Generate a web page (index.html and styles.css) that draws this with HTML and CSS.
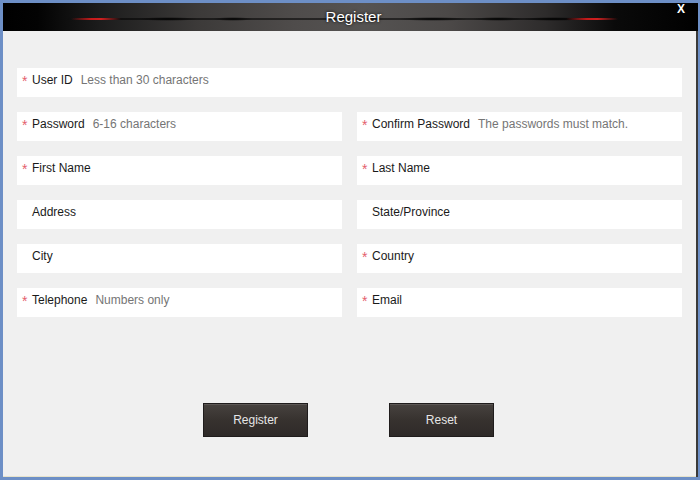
FILE: index.html
```html
<!DOCTYPE html>
<html>
<head>
<meta charset="utf-8">
<link rel="stylesheet" href="styles.css">
</head>
<body>
<div class="window">
  <div class="titlebar">
    <span class="title">Register</span>
    <span class="close">X</span>
  </div>
  <div class="content">
    <div class="form">
      <div class="field full"><span class="req">*</span><span class="label">User ID</span><span class="hint">Less than 30 characters</span></div>
      <div class="field"><span class="req">*</span><span class="label">Password</span><span class="hint">6-16 characters</span></div>
      <div class="field"><span class="req">*</span><span class="label">Confirm Password</span><span class="hint">The passwords must match.</span></div>
      <div class="field"><span class="req">*</span><span class="label">First Name</span></div>
      <div class="field"><span class="req">*</span><span class="label">Last Name</span></div>
      <div class="field"><span class="req"></span><span class="label">Address</span></div>
      <div class="field"><span class="req"></span><span class="label">State/Province</span></div>
      <div class="field"><span class="req"></span><span class="label">City</span></div>
      <div class="field"><span class="req">*</span><span class="label">Country</span></div>
      <div class="field"><span class="req">*</span><span class="label">Telephone</span><span class="hint">Numbers only</span></div>
      <div class="field"><span class="req">*</span><span class="label">Email</span></div>
    </div>
    <div class="actions">
      <button class="btn">Register</button>
      <button class="btn">Reset</button>
    </div>
  </div>
</div>
</body>
</html>
```
FILE: styles.css
```css
html, body {
  margin: 0;
  padding: 0;
}
body {
  width: 700px;
  height: 480px;
  font-family: "Liberation Sans", Arial, sans-serif;
}
.window {
  box-sizing: border-box;
  width: 700px;
  height: 480px;
  border-style: solid;
  border-color: #6d8fc6;
  border-width: 3px 2px 3px 3px;
  box-shadow: inset -2px 0 0 #3a3a3a, inset 0 -1px 0 #e6e2cc;
  background: #f0f0f0;
  display: flex;
  flex-direction: column;
}
.titlebar {
  position: relative;
  height: 28px;
  flex: none;
  display: flex;
  align-items: center;
  justify-content: center;
  background-color: #000;
  background-image:
    linear-gradient(90deg, transparent, #c41a1a 40%, #d02020 60%, transparent),
    linear-gradient(90deg, transparent, #c41a1a 40%, #d02020 60%, transparent),
    radial-gradient(closest-side, rgba(0,0,0,0.9), transparent),
    radial-gradient(closest-side, rgba(0,0,0,0.9), transparent),
    radial-gradient(closest-side, rgba(0,0,0,0.9), transparent),
    radial-gradient(closest-side, rgba(0,0,0,0.9), transparent),
    radial-gradient(closest-side, rgba(0,0,0,0.9), transparent),
    linear-gradient(90deg, transparent, rgba(0,0,0,0.55) 10%, rgba(0,0,0,0.55) 90%, transparent),
    linear-gradient(90deg, #000 0, #030303 5%, #1c1c1c 14%, #3c3a39 28%, #4f4c4b 42%, #555352 52%, #4c4948 64%, #2e2c2c 78%, #0a0a0a 88%, #000 100%);
  background-repeat: no-repeat;
  background-size:
    50px 2px,
    52px 2px,
    60px 4px,
    40px 4px,
    70px 4px,
    50px 4px,
    60px 4px,
    560px 2px,
    100% 100%;
  background-position:
    68px 15px,
    563px 15px,
    135px 14px,
    210px 14px,
    395px 14px,
    470px 14px,
    520px 14px,
    60px 15px,
    0 0;
}
.title {
  color: #fff;
  font-size: 15px;
  margin-left: 6px;
  margin-bottom: 2px;
  text-shadow: 0 0 3px #000;
}
.close {
  position: absolute;
  right: 13px;
  top: -1px;
  color: #fff;
  font-size: 12px;
  font-weight: bold;
}
.content {
  flex: 1;
  padding: 37px 14px 0 14px;
}
.form {
  display: grid;
  grid-template-columns: 325px 325px;
  grid-auto-rows: 29px;
  column-gap: 15px;
  row-gap: 15px;
}
.field {
  background: #fff;
  font-size: 12px;
  line-height: 25px;
  white-space: nowrap;
}
.field.full {
  grid-column: 1 / 3;
}
.req {
  display: inline-block;
  width: 10px;
  padding-left: 5px;
  color: #e4606c;
  font-size: 14px;
  vertical-align: -2px;
  line-height: 20px;
}
.label {
  color: #1a1a1a;
}
.hint {
  color: #757575;
  margin-left: 8px;
}
.actions {
  display: flex;
  gap: 81px;
  margin-top: 86px;
  padding-left: 186px;
}
.btn {
  box-sizing: border-box;
  width: 105px;
  height: 34px;
  border: 1px solid #1f1c1c;
  background: linear-gradient(#47423f, #37322f 50%, #2e2a28);
  box-shadow: inset 0 1px 0 #5c5755;
  color: #e6e6e6;
  font-family: "Liberation Sans", Arial, sans-serif;
  font-size: 12px;
  padding: 0;
}
```
